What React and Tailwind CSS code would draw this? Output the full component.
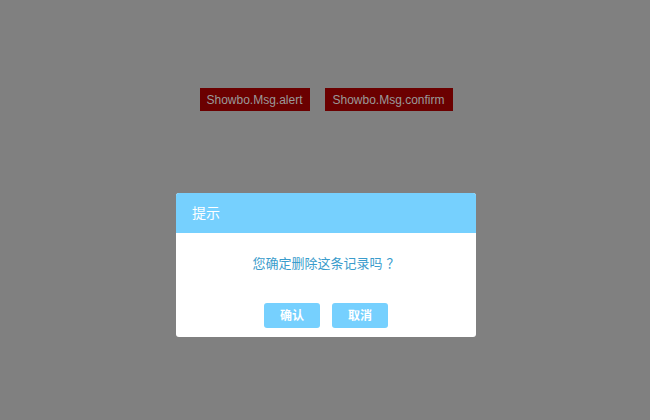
export default function App() {
  return (
    <div className="relative min-h-[420px] bg-[#808080] font-['Liberation_Sans','Noto_Sans_CJK_SC',sans-serif]">
      <div className="flex justify-center gap-[15px] pl-[2px] pt-[88px]">
        <button
          type="button"
          className="h-[23px] w-[110px] bg-[#6b0000] text-[12px] text-[#9a9a9a]"
        >
          Showbo.Msg.alert
        </button>
        <button
          type="button"
          className="h-[23px] w-[128px] bg-[#6b0000] text-[12px] text-[#9a9a9a]"
        >
          Showbo.Msg.confirm
        </button>
      </div>

      <div className="absolute left-[176px] top-[193px] w-[300px] overflow-hidden rounded-[3px] bg-white">
        <div className="flex h-[40px] items-center bg-[#76d0fe] pl-[16px] text-[14px] text-white">
          提示
        </div>
        <p className="pt-[22px] text-center font-['Noto_Sans_CJK_SC',sans-serif] text-[13px] leading-[16px] text-[#3a9ccc]">
          您确定删除这条记录吗<span className="ml-[4px]">？</span>
        </p>
        <div className="flex justify-center gap-[12px] pb-[9px] pt-[32px]">
          <button
            type="button"
            className="h-[25px] w-[56px] rounded-[3px] bg-[#76d0fe] text-[12px] font-bold text-white"
          >
            确认
          </button>
          <button
            type="button"
            className="h-[25px] w-[56px] rounded-[3px] bg-[#76d0fe] text-[12px] font-bold text-white"
          >
            取消
          </button>
        </div>
      </div>
    </div>
  );
}
